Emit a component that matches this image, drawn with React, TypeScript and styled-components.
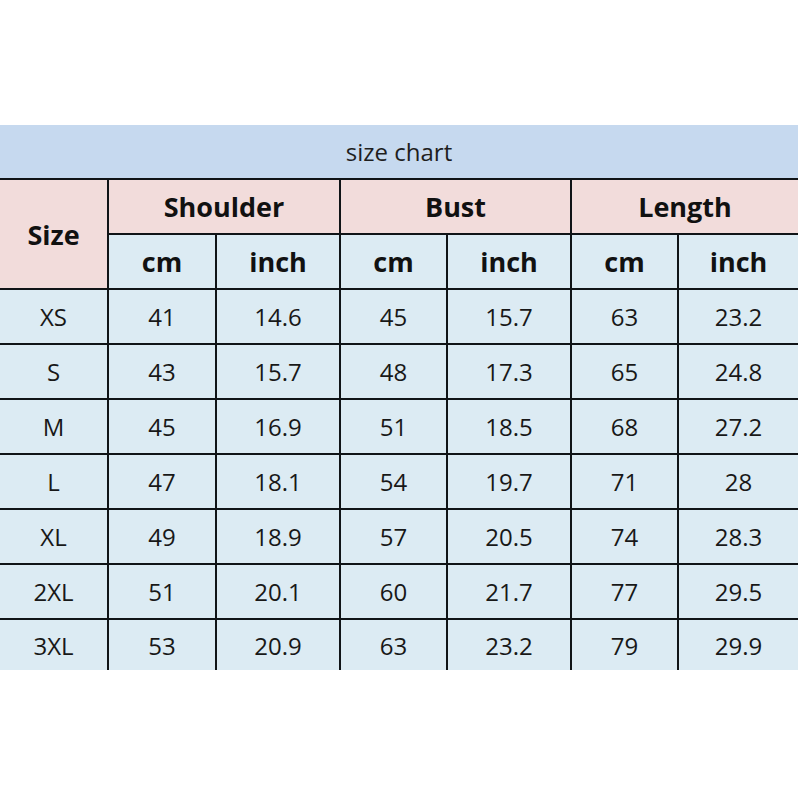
import React from "react";
import styled, { createGlobalStyle } from "styled-components";

const GlobalStyle = createGlobalStyle`
  html, body {
    margin: 0;
    padding: 0;
    background: #ffffff;
  }
  body {
    font-family: "Open Sans", "Noto Sans", sans-serif;
  }
`;

const Page = styled.div`
  width: 800px;
  height: 800px;
  padding-top: 125px;
  box-sizing: border-box;
`;

const Chart = styled.div`
  width: 798px;
`;

const Title = styled.div`
  height: 53px;
  background: #c6d9ef;
  display: flex;
  align-items: center;
  justify-content: center;
  font-size: 24px;
  color: #1e1e1e;
`;

const Grid = styled.div`
  display: grid;
  grid-template-columns: 107px 106px 122px 105px 122px 105px 119px;
  grid-template-rows: repeat(8, 53px) 50px;
  gap: 2px;
  padding-top: 2px;
  background: #101417;
`;

const Cell = styled.div<{ $tone?: "pink" | "blue"; $bold?: boolean; $span?: number; $rows?: number }>`
  display: flex;
  align-items: center;
  justify-content: center;
  background: ${(p) => (p.$tone === "pink" ? "#f2dcdb" : "#dcebf3")};
  font-size: ${(p) => (p.$bold ? "27px" : "24px")};
  font-weight: ${(p) => (p.$bold ? 700 : 400)};
  color: ${(p) => (p.$bold ? "#111" : "#181818")};
  grid-column: span ${(p) => p.$span ?? 1};
  grid-row: span ${(p) => p.$rows ?? 1};
`;

const rows = [
  ["XS", "41", "14.6", "45", "15.7", "63", "23.2"],
  ["S", "43", "15.7", "48", "17.3", "65", "24.8"],
  ["M", "45", "16.9", "51", "18.5", "68", "27.2"],
  ["L", "47", "18.1", "54", "19.7", "71", "28"],
  ["XL", "49", "18.9", "57", "20.5", "74", "28.3"],
  ["2XL", "51", "20.1", "60", "21.7", "77", "29.5"],
  ["3XL", "53", "20.9", "63", "23.2", "79", "29.9"],
];

const groups = ["Shoulder", "Bust", "Length"];

export default function App() {
  return (
    <Page>
      <GlobalStyle />
      <Chart>
        <Title>size chart</Title>
        <Grid>
          <Cell $tone="pink" $bold $rows={2}>Size</Cell>
          {groups.map((g) => (
            <Cell key={g} $tone="pink" $bold $span={2}>{g}</Cell>
          ))}
          {groups.map((g) => (
            <React.Fragment key={g + "-units"}>
              <Cell $bold>cm</Cell>
              <Cell $bold>inch</Cell>
            </React.Fragment>
          ))}
          {rows.map((r) =>
            r.map((v, i) => <Cell key={r[0] + i}>{v}</Cell>)
          )}
        </Grid>
      </Chart>
    </Page>
  );
}
